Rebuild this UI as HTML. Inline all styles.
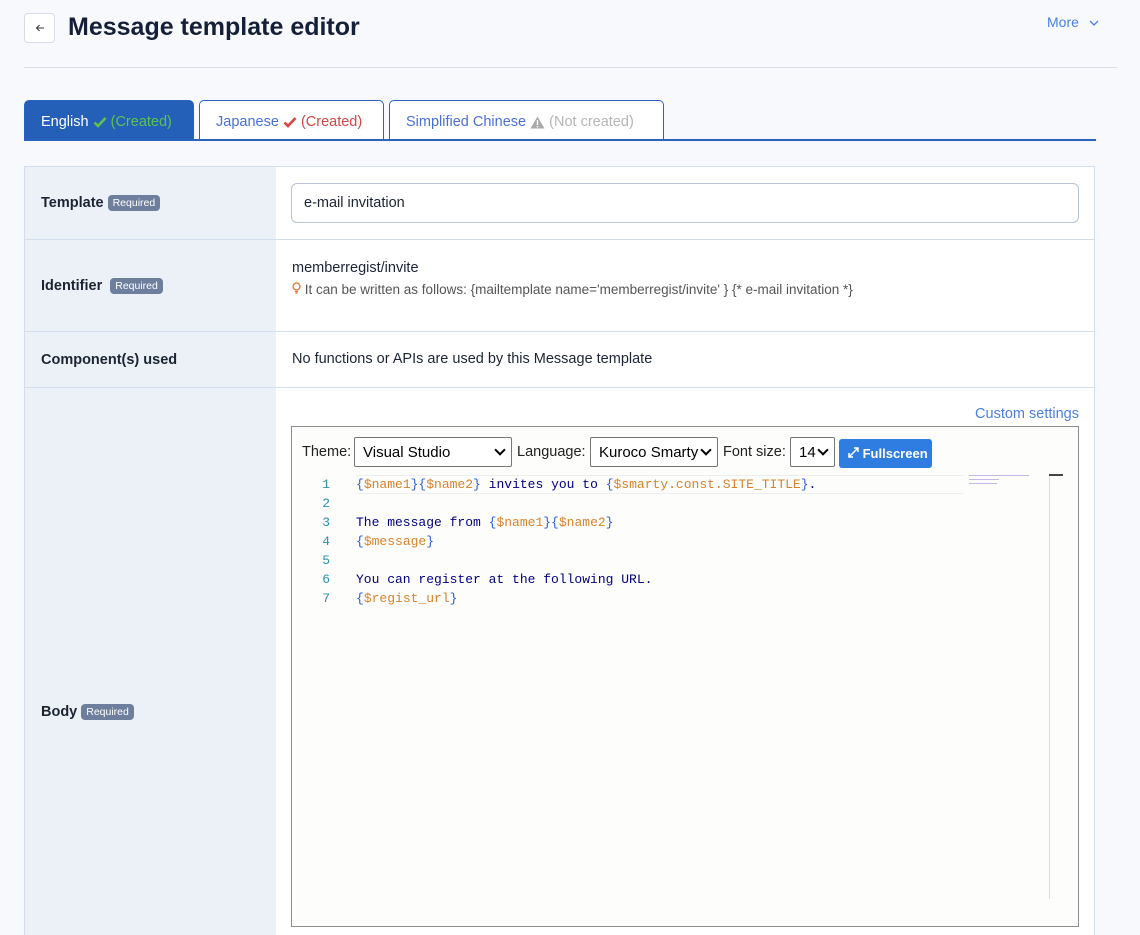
<!DOCTYPE html>
<html style="width:1140px;height:935px;overflow:hidden"><head><meta charset="utf-8"><style>
*{box-sizing:border-box;margin:0;padding:0}
body{width:1140px;height:935px;overflow:hidden;background:#f8f9fc;font-family:"Liberation Sans",sans-serif;color:#1c2433;position:relative}
.abs{position:absolute}
.back{left:24px;top:13px;width:31px;height:30px;border:1px solid #d6dde8;border-radius:4px;background:#fff;display:flex;align-items:center;justify-content:center}
.more{left:1047px;top:14px;font-size:14px;color:#4a7ee6}
.hr{left:24px;top:67px;width:1093px;height:1px;background:#d8dfe8}
.tab{top:100px;height:41px;border:1px solid #2a62c2;border-bottom:none;border-radius:5px 5px 0 0;background:#fff;font-size:14.5px;display:flex;align-items:center;padding-left:16px;padding-top:2px;color:#4a6fd8}
.tabline{left:24px;top:139px;width:1072px;height:2px;background:#2a62c2}
.tbl{left:24px;top:166px;width:1071px;height:769px;border:1px solid #d3deed;border-bottom:none;background:#fff;overflow:hidden}
.lab{position:absolute;left:0;width:251px;background:#ecf1f8;font-size:14.5px;font-weight:bold;color:#1c2433;padding-left:16px;display:flex;align-items:center}
.row{position:absolute;left:0;width:1069px;border-bottom:1px solid #d3deed}
.req{display:inline-block;background:#6d7f9c;color:#fff;font-size:10.5px;font-weight:normal;border-radius:4px;padding:2px 5px;margin-left:4px}
.val{position:absolute;left:267px;font-size:14.5px;color:#1c2433}
.mono{font-family:"Liberation Mono",monospace;font-size:13px}
.ln{position:absolute;left:0;width:38px;text-align:right;color:#2b91af}
.cl{position:absolute;left:64px;color:#000080;white-space:pre}
.o{color:#d9822b}.b{color:#2a5bd7}
.sel{position:absolute;top:10px;height:30px;border:1px solid #767676;border-radius:2px;background:#fff;font-size:15px;color:#000;padding:6px 0 0 8px}
.sel:after{content:"";position:absolute;right:7px;top:8px;width:6px;height:6px;border-right:2px solid #000;border-bottom:2px solid #000;transform:rotate(45deg)}
</style></head><body>
<div class="abs back"><svg width="10" height="10" viewBox="0 0 10 10"><path d="M9 5H1.5M4.5 2L1.5 5l3 3" stroke="#333" stroke-width="1" fill="none"/></svg></div>
<div class="abs" style="left:68px;top:13px;font-size:25px;font-weight:bold;color:#152038">Message template editor</div>
<div class="abs more">More <svg width="10" height="8" viewBox="0 0 10 8" style="margin-left:6px"><path d="M1 2l4 4 4-4" stroke="#4a7ee6" stroke-width="1.3" fill="none"/></svg></div>
<div class="abs hr"></div>

<div class="abs tab" style="left:24px;width:170px;background:#2460b8;color:#fff">English&nbsp;<svg width="14" height="12" viewBox="0 0 14 12"><path d="M1.5 6.5l3.5 3.5 7.5-8" stroke="#5cc254" stroke-width="2.6" fill="none"/></svg><span style="color:#5cc254">&nbsp;(Created)</span></div>
<div class="abs tab" style="left:199px;width:185px">Japanese&nbsp;<svg width="14" height="12" viewBox="0 0 14 12"><path d="M1.5 6.5l3.5 3.5 7.5-8" stroke="#d64545" stroke-width="2.6" fill="none"/></svg><span style="color:#d64545">&nbsp;(Created)</span></div>
<div class="abs tab" style="left:389px;width:275px">Simplified Chinese&nbsp;<svg width="15" height="13" viewBox="0 0 15 13"><path d="M7.5 0.5L14.5 12.5H0.5Z" fill="#aaa"/><rect x="6.8" y="4" width="1.4" height="5" fill="#fff"/><rect x="6.8" y="10" width="1.4" height="1.4" fill="#fff"/></svg><span style="color:#b5b5b5">&nbsp;(Not created)</span></div>
<div class="abs tabline"></div>

<div class="abs tbl">
 <div class="row" style="top:0;height:73px"><div class="lab" style="top:0;height:72px">Template<span class="req">Required</span></div>
  <div class="abs" style="left:266px;top:16px;width:788px;height:40px;border:1px solid #b9c4d6;border-radius:6px;font-size:14.5px;padding:11px 0 0 12px">e-mail invitation</div></div>
 <div class="row" style="top:73px;height:92px"><div class="lab" style="top:0;height:91px">Identifier<span class="req" style="margin-left:8px">Required</span></div>
  <div class="val" style="top:20px">memberregist/invite</div>
  <div class="val" style="top:42px;font-size:13.5px;color:#555"><svg width="9" height="12" viewBox="0 0 9 12"><circle cx="4.5" cy="4.5" r="3.5" stroke="#e8702a" stroke-width="1.3" fill="none"/><path d="M3 9.5h3M3.5 11h2" stroke="#e8702a" stroke-width="1.2"/></svg> It can be written as follows: {mailtemplate name='memberregist/invite' } {* e-mail invitation *}</div></div>
 <div class="row" style="top:165px;height:56px"><div class="lab" style="top:0;height:55px">Component(s) used</div>
  <div class="val" style="top:19px">No functions or APIs are used by this Message template</div></div>
 <div class="row" style="top:221px;height:548px;border:none"><div class="lab" style="top:0;height:548px;align-items:flex-start;padding-top:316px">Body<span class="req">Required</span></div>
  <div class="abs" style="left:944px;top:18px;width:110px;text-align:right;font-size:14.5px;color:#4a7ee6">Custom settings</div>
  <div class="abs" style="left:266px;top:38px;width:788px;height:501px;border:1px solid #8d8d8d;background:#fdfdfc">
   <div class="abs" style="left:10px;top:17px;font-size:14.5px;color:#222">Theme:</div>
   <div class="sel" style="left:62px;width:158px">Visual Studio</div>
   <div class="abs" style="left:225px;top:17px;font-size:14.5px;color:#222">Language:</div>
   <div class="sel" style="left:298px;width:128px">Kuroco Smarty</div>
   <div class="abs" style="left:431px;top:17px;font-size:14.5px;color:#222">Font size:</div>
   <div class="sel" style="left:498px;width:45px">14</div>
   <div class="abs" style="left:547px;top:12px;width:93px;height:29px;background:#2f7de1;border-radius:3px;color:#fff;font-size:13px;font-weight:bold;padding:7px 0 0 9px"><svg width="11" height="11" viewBox="0 0 11 11"><path d="M1 10L10 1M6 1h4v4M1 6v4h4" stroke="#fff" stroke-width="1.5" fill="none"/></svg> Fullscreen</div>
   <div class="abs" style="left:64px;top:48px;width:607px;height:19px;border:1px solid #eee;border-left:none;border-right:none"></div>
   <div class="mono abs" style="left:0;top:49px;width:680px;height:400px">
    <div class="ln" style="top:1px">1</div><div class="cl" style="top:1px"><span class="b">{</span><span class="o">$name1</span><span class="b">}{</span><span class="o">$name2</span><span class="b">}</span> invites you to <span class="b">{</span><span class="o">$smarty.const.SITE_TITLE</span><span class="b">}</span>.</div>
    <div class="ln" style="top:20px">2</div>
    <div class="ln" style="top:39px">3</div><div class="cl" style="top:39px">The message from <span class="b">{</span><span class="o">$name1</span><span class="b">}{</span><span class="o">$name2</span><span class="b">}</span></div>
    <div class="ln" style="top:58px">4</div><div class="cl" style="top:58px"><span class="b">{</span><span class="o">$message</span><span class="b">}</span></div>
    <div class="ln" style="top:77px">5</div>
    <div class="ln" style="top:96px">6</div><div class="cl" style="top:96px">You can register at the following URL.</div>
    <div class="ln" style="top:115px">7</div><div class="cl" style="top:115px"><span class="b">{</span><span class="o">$regist_url</span><span class="b">}</span></div>
   </div>
   <div class="abs" style="left:677px;top:48px;width:60px;height:1px;background:#c8b8e8"></div>
   <div class="abs" style="left:677px;top:52px;width:30px;height:1px;background:#c8b8e8"></div>
   <div class="abs" style="left:677px;top:56px;width:28px;height:1px;background:#c8b8e8"></div>
   <div class="abs" style="left:757px;top:48px;width:1px;height:424px;background:#ddd"></div>
   <div class="abs" style="left:757px;top:47px;width:14px;height:2px;background:#444"></div>
  </div>
 </div>
</div>
</body></html>
